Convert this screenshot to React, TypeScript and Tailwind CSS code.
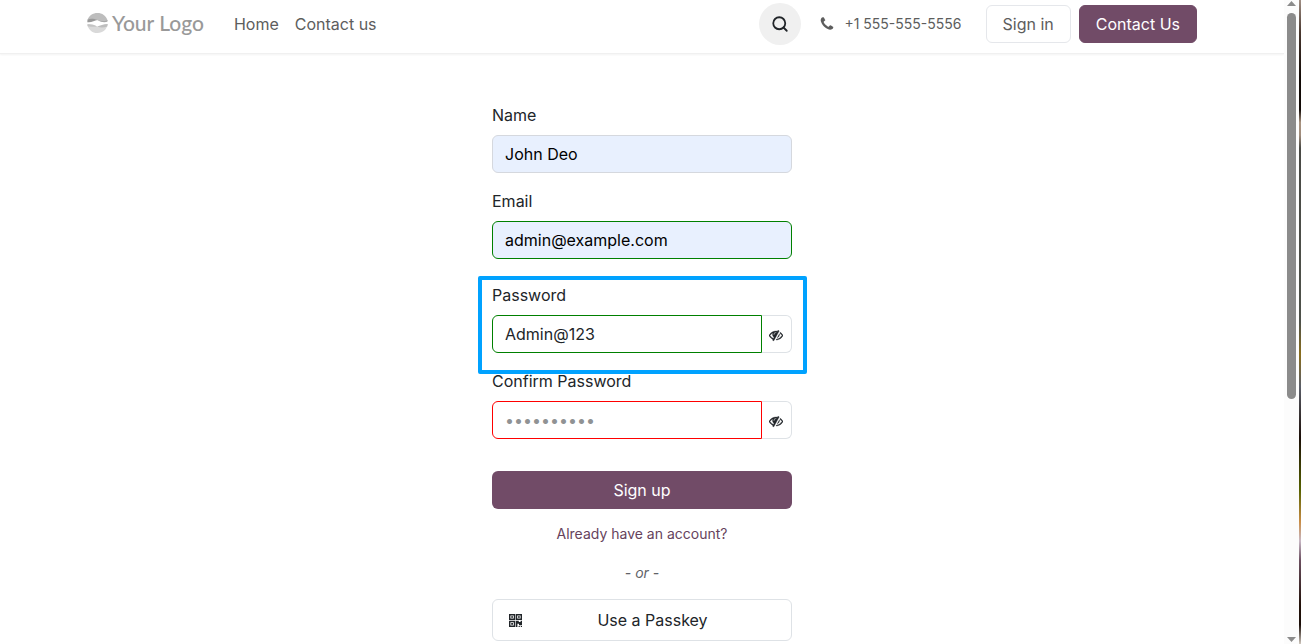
import type { ReactNode } from "react";
import { Search } from "lucide-react";

const EyeSlashIcon = () => (
  <svg
    viewBox="0 0 1792 1792"
    className="h-[14px] w-[14px]"
    fill="currentColor"
    stroke="currentColor"
    strokeWidth="40"
    aria-hidden="true"
  >
    <path d="M555 1335l78-141q-87-63-136-159t-49-203q0-121 61-225-229 117-381 353 167 258 427 375zm389-759q0-20-14-34t-34-14q-125 0-214.5 89.5t-89.5 214.5q0 20 14 34t34 14 34-14 14-34q0-86 61-147t147-61q20 0 34-14t14-34zm363-191q0 7-1 9-106 189-316 567t-315 566l-49 89q-10 16-28 16-12 0-134-70-16-10-16-28 0-12 44-87-143-65-263.5-173t-208.5-245q-20-31-20-69t20-69q153-235 380-371t496-136q89 0 180 17l54-97q10-16 28-16 5 0 18 6t31 15.5 33 18.5 31.5 18.5 19.5 11.5q16 10 16 27zm37 447q0 139-79 253.5t-209 164.5l280-502q8 45 8 84zm448 128q0 35-20 69-39 64-109 145-150 172-347.5 267t-419.5 95l74-132q212-18 392.5-137t301.5-307q-115-179-282-294l63-112q95 64 182.5 153t144.5 182q20 34 20 69z" />
  </svg>
);

const PhoneIcon = () => (
  <svg viewBox="0 0 1792 1792" className="h-4 w-4" fill="currentColor" aria-hidden="true">
    <path d="M1600 1240q0 27-10 70.5t-21 68.5q-21 50-122 106-94 51-186 51-27 0-53-3.5t-57.5-12.5-47-14.5-55.5-20.5-49-18q-98-35-175-83-127-79-264-216t-216-264q-48-77-83-175-3-9-18-49t-20.5-55.5-14.5-47-12.5-57.5-3.5-53q0-92 51-186 56-101 106-122 25-11 68.5-21t70.5-10q14 0 21 3 18 6 53 76 11 19 30 54t35 63.5 31 53.5q3 4 17.5 25t21.5 35.5 7 28.5q0 20-28.5 50t-62 55-62 53-28.5 46q0 9 5 22.5t8.5 20.5 14 24 11.5 19q76 137 174 235t235 174q2 1 19 11.5t24 14 20.5 8.5 22.5 5q18 0 46-28.5t53-62 55-62 50-28.5q14 0 28.5 7t35.5 21.5 25 17.5q25 15 53.5 31t63.5 35 54 30q70 35 76 53 3 7 3 21z" />
  </svg>
);

const QrIcon = () => (
  <svg viewBox="0 0 13 13" className="h-[13px] w-[13px]" fill="currentColor" aria-hidden="true">
    <path fillRule="evenodd" d="M0 0h6.2v6H0zM1.4 1.4v3.2h3.4V1.4zM6.8 0H13v6H6.8zM8.2 1.4v3.2h3.4V1.4zM0 6.8h6.2V13H0zM1.4 8.2v3.4h3.4V8.2z" />
    <path d="M2.2 2.2H4v1.6H2.2zM9 2.2h1.8v1.6H9zM2.2 9H4v1.8H2.2zM6.8 6.8h3v1.2h1.8V6.8H13v4.4h-3V9.8H8.4V13H6.8zM9.6 12h1.2v1H9.6zM11.8 12H13v1h-1.2z" />
  </svg>
);

const LogoMark = () => (
  <svg viewBox="0 0 21 20" className="h-5 w-[21px]" aria-hidden="true">
    <path d="M0.6 6.6C2 2.6 5.8 0 10.5 0S19 2.6 20.6 7.4C20.2 9 17.5 9.4 15 9L10 7z" fill="#bdbdbd" />
    <path d="M0.5 6.4C3 5.4 6.5 5.2 10.5 7C7.5 7.6 4.5 9.8 0.3 9.2z" fill="#999999" />
    <path d="M10.5 7C13.5 8.4 17 8.4 20.5 7.2V8.6C17.5 9.6 14 9.2 10.5 7z" fill="#a8a8a8" />
    <path d="M0.3 11.4C4 11 7 12 10 13.4C13.5 14.6 16.5 12.2 20.7 11C20 16.2 16 20 10.5 20S1 16.2 0.3 11.4z" fill="#d9d9d9" />
    <path d="M10 13.4C13.5 12.6 16 11 20.7 11L20.2 13.4C16.5 15 13.5 14.8 10 13.4z" fill="#bdbdbd" />
    <path d="M0.3 11.4C4 11 7 12 10 13.4C7 14.2 4 13.6 0.7 13.2z" fill="#c4c4c4" />
  </svg>
);

type FieldProps = {
  id: string;
  label: string;
  className?: string;
  children: ReactNode;
};

const Field = ({ id, label, className = "", children }: FieldProps) => (
  <div className={className}>
    <label htmlFor={id} className="mb-2 block w-fit">
      {label}
    </label>
    {children}
  </div>
);

const ToggleButton = ({ label }: { label: string }) => (
  <button
    type="button"
    aria-label={label}
    className="flex w-[30px] items-center justify-center rounded-r-md border border-l-0 border-[#dee2e6] pt-[2px] pr-[2px]"
  >
    <EyeSlashIcon />
  </button>
);

const Header = () => (
  <header className="border-b border-[#f0f0f0] pt-[3px] pb-2 shadow-[0_1px_2px_rgba(0,0,0,0.05)]">
    <div className="mx-auto flex max-w-[1110px] items-center text-[#5d5d5d]">
      <a href="#" className="flex items-center gap-1 pb-[2px]">
        <LogoMark />
        <span className="font-['Lato',sans-serif] text-[21px] leading-6 font-medium text-[#999999]">
          Your Logo
        </span>
      </a>
      <nav className="ml-[30px] flex gap-4">
        <a href="#">Home</a>
        <a href="#">Contact us</a>
      </nav>
      <button
        type="button"
        aria-label="Search"
        className="ml-auto flex h-[42px] w-[42px] items-center justify-center rounded-full bg-[#f0f0f0] text-[#212529]"
      >
        <Search className="h-[18px] w-[18px]" strokeWidth={2.4} />
      </button>
      <a href="tel:+15555555556" className="ml-[18px] flex items-center gap-[9px] text-sm">
        <PhoneIcon />
        +1 555-555-5556
      </a>
      <a
        href="#"
        className="ml-6 rounded-md border border-[#e5e7eb] px-4 py-[6px]"
      >
        Sign in
      </a>
      <a
        href="#"
        className="ml-2 rounded-md border border-[#714b67] bg-[#714b67] px-4 py-[6px] text-white"
      >
        Contact Us
      </a>
    </div>
  </header>
);

const SignupForm = () => (
  <form className="mx-auto w-full max-w-[300px] pt-[49px]" onSubmit={(e) => e.preventDefault()}>
    <Field id="name" label="Name">
      <input
        id="name"
        type="text"
        defaultValue="John Deo"
        className="block h-[38px] w-full rounded-md border border-[#d5d8de] bg-[#e8f0fe] px-3 text-black outline-none"
      />
    </Field>
    <Field id="email" label="Email" className="mt-4">
      <input
        id="email"
        type="text"
        defaultValue="admin@example.com"
        className="block h-[38px] w-full rounded-md border border-[#008000] bg-[#e8f0fe] px-3 text-black outline-none"
      />
    </Field>
    <Field id="password" label="Password" className="relative mt-6">
      <div className="flex">
        <input
          id="password"
          type="text"
          defaultValue="Admin@123"
          className="h-[38px] min-w-0 flex-1 rounded-l-md border border-[#008000] px-3 outline-none"
        />
        <ToggleButton label="Hide password" />
      </div>
      <span className="pointer-events-none absolute -top-[7px] -right-[15px] -bottom-[21px] -left-[14px] z-10 rounded-[2px] border-4 border-[#00a2ff]" />
    </Field>
    <Field id="confirm" label="Confirm Password" className="mt-4">
      <div className="flex">
        <input
          id="confirm"
          type="password"
          placeholder="••••••••••"
          className="h-[38px] min-w-0 flex-1 rounded-l-md border border-[#ff0000] px-3 outline-none placeholder:text-[#909294]"
        />
        <ToggleButton label="Show confirm password" />
      </div>
    </Field>
    <button type="submit" className="mt-8 block h-[38px] w-full rounded-md bg-[#714b67] text-white">
      Sign up
    </button>
    <div className="mt-[14px] text-center text-sm leading-[21px]">
      <a href="#" className="text-[#66435c]">
        Already have an account?
      </a>
    </div>
    <p className="mt-[18px] text-center text-sm leading-[21px] text-[#5f6368] italic">- or -</p>
    <button
      type="button"
      className="mt-4 flex h-[42px] w-full items-center rounded-md border border-[#dee2e6] px-4"
    >
      <QrIcon />
      <span className="flex-1 pl-2">Use a Passkey</span>
    </button>
  </form>
);

const Scrollbar = () => (
  <div className="flex w-[15px] flex-col items-center bg-[#fcfcfc] pr-[1px]">
    <svg viewBox="0 0 9 13" className="h-[13px] w-[9px]" fill="#8b8b8b" aria-hidden="true">
      <path d="M0 6L4.5 1L9 6z" />
    </svg>
    <div className="h-3/5 w-[9px] rounded-full bg-[#8b8b8b]" />
    <svg viewBox="0 0 9 8" className="mt-auto h-2 w-[9px]" fill="#8b8b8b" aria-hidden="true">
      <path d="M0 1L4.5 6L9 1z" />
    </svg>
  </div>
);

const App = () => (
  <div className="flex h-screen bg-white font-['Inter',sans-serif] text-base text-[#212529]">
    <div className="min-w-0 flex-1">
      <Header />
      <main>
        <SignupForm />
      </main>
    </div>
    <Scrollbar />
    {/* Sliver of desktop wallpaper beside the window */}
    <div className="w-[2px] bg-[linear-gradient(#a08f85_0%,#4a3930_5%,#120a06_12%,#120a06_17%,#a8927f_19%,#a08c7c_21%,#4a4a45_23%,#4e514a_50%,#8a6d1c_55%,#5b5e68_60%,#1b0e08_68%,#566100_76%,#c98d46_81%,#c7b7c4_84%,#6c5060_87%,#211008_94%,#1b0e08_97%,#d0c8bf_100%)]" />
  </div>
);

export default App;
